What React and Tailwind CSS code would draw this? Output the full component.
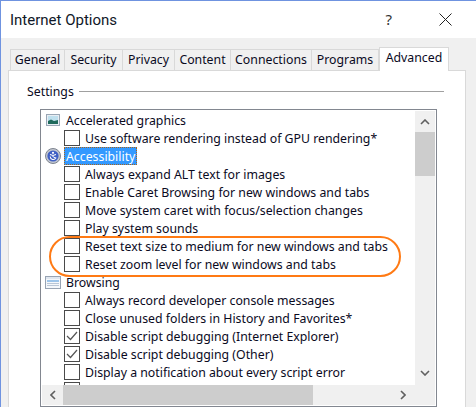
const TABS = [
  { label: 'General', w: 'w-[55px]' },
  { label: 'Security', w: 'w-[58px]' },
  { label: 'Privacy', w: 'w-[52px]' },
  { label: 'Content', w: 'w-[56px]' },
  { label: 'Connections', w: 'w-[81px]' },
  { label: 'Programs', w: 'w-[67px]' },
]

const ROWS = [
  { type: 'group', icon: 'graphics', label: 'Accelerated graphics' },
  { type: 'check', label: 'Use software rendering instead of GPU rendering*' },
  { type: 'group', icon: 'access', label: 'Accessibility', selected: true },
  { type: 'check', label: 'Always expand ALT text for images' },
  { type: 'check', label: 'Enable Caret Browsing for new windows and tabs' },
  { type: 'check', label: 'Move system caret with focus/selection changes' },
  { type: 'check', label: 'Play system sounds' },
  { type: 'check', label: 'Reset text size to medium for new windows and tabs' },
  { type: 'check', label: 'Reset zoom level for new windows and tabs' },
  { type: 'group', icon: 'browsing', label: 'Browsing' },
  { type: 'check', label: 'Always record developer console messages' },
  { type: 'check', label: 'Close unused folders in History and Favorites*' },
  { type: 'check', label: 'Disable script debugging (Internet Explorer)', checked: true },
  { type: 'check', label: 'Disable script debugging (Other)', checked: true },
  { type: 'check', label: 'Display a notification about every script error' },
  { type: 'check', label: '' },
]

function GroupIcon({ name }) {
  if (name === 'graphics') {
    return (
      <svg width="14" height="12" viewBox="0 0 14 12">
        <rect x="0.5" y="0.5" width="13" height="11" fill="#e8eef4" stroke="#9aa7b5" />
        <rect x="2" y="2" width="10" height="8" fill="#bfe0ee" />
        <path d="M2 7 L5 5.5 L8 7 L12 6 V10 H2 Z" fill="#1f6a5c" />
      </svg>
    )
  }
  if (name === 'access') {
    return (
      <svg width="16" height="16" viewBox="0 0 16 16">
        <circle cx="8" cy="8" r="7.5" fill="#c4c8d0" stroke="#7d8490" />
        <circle cx="8" cy="8" r="5.6" fill="#3f5fc4" />
        <circle cx="8" cy="4.8" r="1.1" fill="#fff" />
        <path d="M5 6.5 L8 7.5 L11 6.5 M8 7.5 V9 M5.2 8.6 A3 3 0 0 0 10.8 10 L8.6 9.2" fill="none" stroke="#fff" strokeWidth="1.1" />
      </svg>
    )
  }
  return (
    <svg width="16" height="13" viewBox="0 0 16 13">
      <rect x="0.5" y="0.5" width="15" height="12" fill="#f4f7fb" stroke="#97a3b3" />
      <rect x="1" y="1" width="14" height="2" fill="#dfe6ef" />
      <rect x="2" y="4" width="12" height="2" fill="#9cc4ea" />
      <rect x="2" y="7" width="12" height="1" fill="#b9c6d6" />
      <rect x="2" y="9" width="12" height="1" fill="#b9c6d6" />
    </svg>
  )
}

function Row({ row }) {
  if (row.type === 'group') {
    return (
      <div className="flex h-[18px] items-center">
        <div className="flex w-[22px] justify-center">
          <GroupIcon name={row.icon} />
        </div>
        {row.selected ? (
          <span className="flex h-[18px] items-center border border-dotted border-[#a8651c] bg-[#3399ff] px-[1px] pt-[2px] text-white">
            {row.label}
          </span>
        ) : (
          <span className="ml-[2px] pt-[2px]">{row.label}</span>
        )}
      </div>
    )
  }
  return (
    <div className="flex h-[18px] items-center pl-[22px]">
      <div className="flex h-[16px] w-[16px] shrink-0 items-center justify-center border border-[#4a4a4a]">
        {row.checked && (
          <svg width="12" height="10" viewBox="0 0 12 10">
            <path d="M1 5 L4.5 8.5 L11 1" fill="none" stroke="#555" strokeWidth="1.2" />
          </svg>
        )}
      </div>
      <span className="ml-[5px] whitespace-nowrap pt-[2px]">{row.label}</span>
    </div>
  )
}

export default function App() {
  return (
    <div className="flex h-[407px] w-[476px] flex-col overflow-hidden border-l border-t border-[#6f93e0] bg-[#f0f0f0] font-['Noto_Sans',sans-serif] text-[12.3px] text-[#0a0a1e]">
      <div className="flex h-[37px] shrink-0 items-center justify-between bg-white pl-[9px] pr-[24px]">
        <span className="pt-[1px] font-['Roboto',sans-serif] text-[15px] text-[#101828]">Internet Options</span>
        <div className="flex items-center gap-[47px]">
          <span className="text-[15px] text-[#333]">?</span>
          <svg width="13" height="13" viewBox="0 0 13 13">
            <path d="M0.5 0.5 L12.5 12.5 M12.5 0.5 L0.5 12.5" stroke="#222" strokeWidth="1" />
          </svg>
        </div>
      </div>

      <div className="box-content flex h-[22px] shrink-0 items-end pl-[9px] pt-[10px]">
        {TABS.map((t) => (
          <div
            key={t.label}
            className={`flex h-[21px] items-center justify-center border-r border-t border-[#d9d9d9] first:border-l ${t.w}`}
          >
            {t.label}
          </div>
        ))}
        <div className="relative z-10 -mb-[1px] flex h-[24px] w-[70px] items-center justify-center border-x border-t border-[#d9d9d9] bg-white pb-[3px]">
          Advanced
        </div>
      </div>

      <div className="ml-[7px] mr-[10px] flex-1 border-l border-r border-t border-[#d9d9d9] bg-white pl-[18px] pr-[21px]">
        <div className="flex h-[38px] items-center pt-[2px]">
          <span className="pt-[2px]">Settings</span>
          <div className="ml-[5px] h-px flex-1 bg-[#a0a0a0]" />
        </div>

        <div className="relative ml-[13px] flex h-[298px] w-[397px] flex-col border border-[#828790] p-[1px]">
          <div className="flex h-[274px] min-h-0 shrink-0">
            <div className="flex-1 overflow-hidden">
              {ROWS.map((row, i) => (
                <Row key={i} row={row} />
              ))}
            </div>
            <div className="flex w-[20px] flex-col items-center bg-[#f0f0f0]">
              <div className="flex h-[21px] w-full items-center justify-center">
                <svg width="10" height="6" viewBox="0 0 10 6">
                  <path d="M1 5 L5 1 L9 5" fill="none" stroke="#606060" strokeWidth="1.6" />
                </svg>
              </div>
              <div className="h-[44px] w-full bg-[#cdcdcd]" />
              <div className="flex-1" />
              <div className="flex h-[24px] w-full items-center justify-center">
                <svg width="10" height="6" viewBox="0 0 10 6">
                  <path d="M1 1 L5 5 L9 1" fill="none" stroke="#606060" strokeWidth="1.6" />
                </svg>
              </div>
            </div>
          </div>
          <div className="flex h-[20px] shrink-0 bg-[#f0f0f0]">
            <div className="flex w-[21px] items-center justify-center">
              <svg width="6" height="10" viewBox="0 0 6 10">
                <path d="M5 1 L1 5 L5 9" fill="none" stroke="#606060" strokeWidth="1.6" />
              </svg>
            </div>
            <div className="w-[250px] bg-[#cdcdcd]" />
            <div className="flex-1" />
            <div className="flex w-[24px] items-center justify-center">
              <svg width="6" height="10" viewBox="0 0 6 10">
                <path d="M1 1 L5 5 L1 9" fill="none" stroke="#606060" strokeWidth="1.6" />
              </svg>
            </div>
            <div className="w-[20px]" />
          </div>
          <div className="absolute left-[8px] top-[126px] h-[41px] w-[352px] rounded-full border-2 border-[#ff7a14]" />
        </div>
      </div>
    </div>
  )
}
